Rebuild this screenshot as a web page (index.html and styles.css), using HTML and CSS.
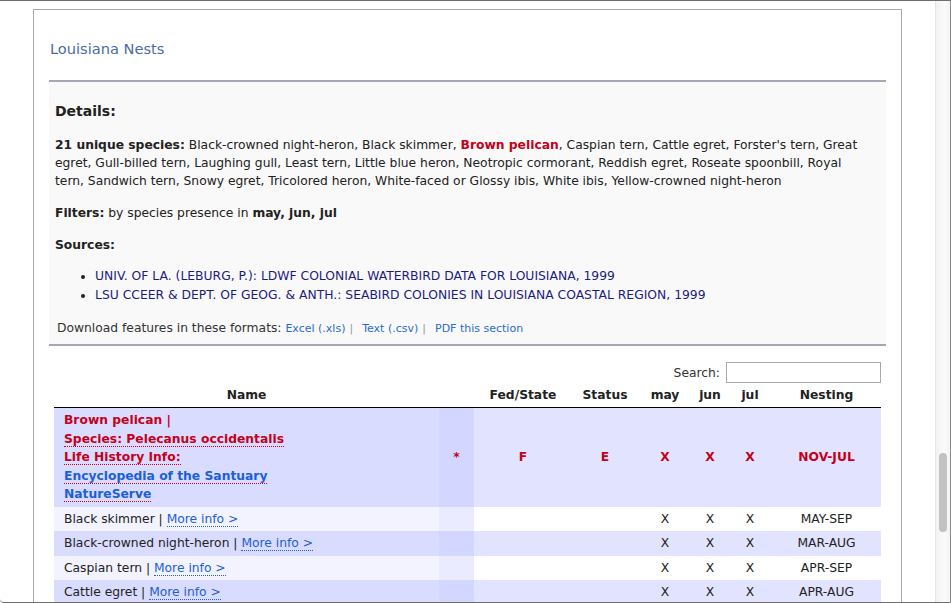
FILE: index.html
```html
<!DOCTYPE html>
<html>
<head>
<meta charset="utf-8">
<link rel="stylesheet" href="styles.css">
</head>
<body>
<div class="window">
  <div class="viewport">
    <div class="box">
      <h2 class="title">Louisiana Nests</h2>
      <div class="panel">
        <h3 class="details-h">Details:</h3>
        <p class="species"><b>21 unique species:</b> Black-crowned night-heron, Black skimmer, <b class="red">Brown pelican</b>, Caspian tern, Cattle egret, Forster's tern, Great egret, Gull-billed tern, Laughing gull, Least tern, Little blue heron, Neotropic cormorant, Reddish egret, Roseate spoonbill, Royal tern, Sandwich tern, Snowy egret, Tricolored heron, White-faced or Glossy ibis, White ibis, Yellow-crowned night-heron</p>
        <p class="para"><b>Filters:</b> by species presence in <b>may, jun, jul</b></p>
        <p class="para"><b>Sources:</b></p>
        <ul class="sources">
          <li><a href="#">UNIV. OF LA. (LEBURG, P.): LDWF COLONIAL WATERBIRD DATA FOR LOUISIANA, 1999</a></li>
          <li><a href="#">LSU CCEER &amp; DEPT. OF GEOG. &amp; ANTH.: SEABIRD COLONIES IN LOUISIANA COASTAL REGION, 1999</a></li>
        </ul>
        <p class="download">Download features in these formats: <a href="#">Excel (.xls)</a><span class="sep">|</span><a href="#">Text (.csv)</a><span class="sep">|</span><a href="#">PDF this section</a></p>
      </div>
      <div class="tablewrap">
        <div class="search"><label>Search:</label><input type="text"></div>
        <table class="data">
          <colgroup>
            <col class="c-name"><col class="c-star"><col class="c-fed"><col class="c-status"><col class="c-may"><col class="c-jun"><col class="c-jul"><col class="c-nest">
          </colgroup>
          <thead>
            <tr><th>Name</th><th></th><th>Fed/State</th><th>Status</th><th>may</th><th>jun</th><th>jul</th><th>Nesting</th></tr>
          </thead>
          <tbody>
            <tr class="odd hl">
              <td class="name s2"><b>Brown pelican</b> |<br><a class="lnk red" href="#">Species: Pelecanus occidentalis</a><br><a class="lnk red" href="#">Life History Info:</a><br><a class="lnk blue" href="#">Encyclopedia of the Santuary</a><br><a class="lnk blue" href="#">NatureServe</a></td>
              <td class="s1">*</td><td>F</td><td>E</td><td>X</td><td>X</td><td>X</td><td>NOV-JUL</td>
            </tr>
            <tr class="even">
              <td class="name s2">Black skimmer | <a class="more" href="#">More info &gt;</a></td>
              <td class="s1"></td><td></td><td></td><td>X</td><td>X</td><td>X</td><td>MAY-SEP</td>
            </tr>
            <tr class="odd">
              <td class="name s2">Black-crowned night-heron | <a class="more" href="#">More info &gt;</a></td>
              <td class="s1"></td><td></td><td></td><td>X</td><td>X</td><td>X</td><td>MAR-AUG</td>
            </tr>
            <tr class="even">
              <td class="name s2">Caspian tern | <a class="more" href="#">More info &gt;</a></td>
              <td class="s1"></td><td></td><td></td><td>X</td><td>X</td><td>X</td><td>APR-SEP</td>
            </tr>
            <tr class="odd">
              <td class="name s2">Cattle egret | <a class="more" href="#">More info &gt;</a></td>
              <td class="s1"></td><td></td><td></td><td>X</td><td>X</td><td>X</td><td>APR-AUG</td>
            </tr>
          </tbody>
        </table>
      </div>
    </div>
  </div>
  <div class="scrollbar"><div class="thumb"></div></div>
</div>
</body>
</html>
```

FILE: styles.css
```css
html, body {
  margin: 0;
  padding: 0;
  background: #fff;
}
body {
  font-family: "DejaVu Sans", "Liberation Sans", sans-serif;
  font-size: 12.3px;
  color: #222;
}
.window {
  width: 951px;
  height: 603px;
  box-sizing: border-box;
  border-top: 1px solid #6e6e6e;
  border-right: 1px solid #8a8a8a;
  border-bottom: 1px solid #6e6e6e;
  border-bottom-left-radius: 4px;
  display: flex;
  overflow: hidden;
}
.viewport {
  flex: 1;
  overflow: hidden;
}
.scrollbar {
  width: 15px;
  box-sizing: border-box;
  border-left: 1px solid #e6e6e6;
  background: linear-gradient(to right, #f2f2f2, #fafafa 60%, #f4f4f4);
  padding-top: 452px;
  padding-left: 3px;
}
.thumb {
  width: 8px;
  height: 79px;
  border-radius: 4px;
  background: #c2c2c2;
}
.box {
  margin: 8px 0 0 33px;
  width: 869px;
  height: 700px;
  box-sizing: border-box;
  border: 1px solid #a9a9b4;
  padding: 0 15px;
}
.title {
  margin: 30px 0 0 0;
  padding-left: 1px;
  font-size: 14.6px;
  line-height: 18px;
  font-weight: normal;
  color: #4a6aa5;
  height: 18px;
}
.panel {
  margin-top: 22px;
  border-top: 2px solid #a6a6b6;
  border-bottom: 2px solid #a6a6b6;
  background: #f9f9f9;
  padding: 0 6px 6px 6px;
}
.details-h {
  margin: 20px 0 0 0;
  font-size: 14px;
  line-height: 18px;
  color: #222;
}
.species {
  margin: 16px 15px 0 0;
  line-height: 18px;
}
.red { color: #c4001a; }
.para {
  margin: 14px 0 0 0;
  line-height: 18px;
}
.sources {
  margin: 13px 0 0 0;
  padding-left: 40px;
  line-height: 19px;
  font-size: 12.35px;
}
.sources a {
  color: #1c1c80;
  text-decoration: none;
}
.download {
  margin: 14px 0 0 2px;
  line-height: 18px;
  color: #333;
}
.download a {
  font-size: 11px;
  color: #2a6bd0;
  text-decoration: none;
}
.download .sep {
  font-size: 11px;
  color: #999;
  margin: 0 9px 0 4px;
}
.tablewrap {
  margin: 16px 5px 0 5px;
}
.search {
  display: flex;
  justify-content: flex-end;
  align-items: center;
  height: 21px;
  gap: 6px;
  color: #333;
}
.search input {
  width: 155px;
  height: 21px;
  box-sizing: border-box;
  border: 1px solid #aaa;
  margin: 0;
  padding: 0 3px;
}
.data {
  width: 827px;
  table-layout: fixed;
  border-collapse: collapse;
}
.c-name { width: 385px; }
.c-star { width: 35px; }
.c-fed { width: 98px; }
.c-status { width: 66px; }
.c-may { width: 54px; }
.c-jun { width: 36px; }
.c-jul { width: 44px; }
.c-nest { width: 109px; }
.data th {
  padding: 3px 0;
  line-height: 18px;
  font-weight: bold;
  color: #222;
  border-bottom: 1px solid #000;
  text-align: center;
}
.data td {
  padding: 3px 0;
  line-height: 18.5px;
  text-align: center;
  vertical-align: middle;
  color: #222;
}
.data td.name {
  text-align: left;
  padding: 3px 10px 3px 10px;
}
.data tr.odd td { background: #e2e4ff; }
.data tr.odd td.s2 { background: #dadcff; }
.data tr.odd td.s1 { background: #d3d6ff; }
.data tr.even td { background: #fff; }
.data tr.even td.s2 { background: #f2f3ff; }
.data tr.even td.s1 { background: #eaebff; }
.data tr.hl td {
  color: #c4001a;
  font-weight: bold;
}
.lnk {
  text-decoration: none;
  border-bottom: 1px dotted #c4001a;
  font-weight: bold;
}
.lnk.red { color: #c4001a; }
.lnk.blue { color: #1a60d8; }
.more {
  color: #1a60d8;
  text-decoration: none;
  border-bottom: 1px dotted #1a60d8;
}
```
